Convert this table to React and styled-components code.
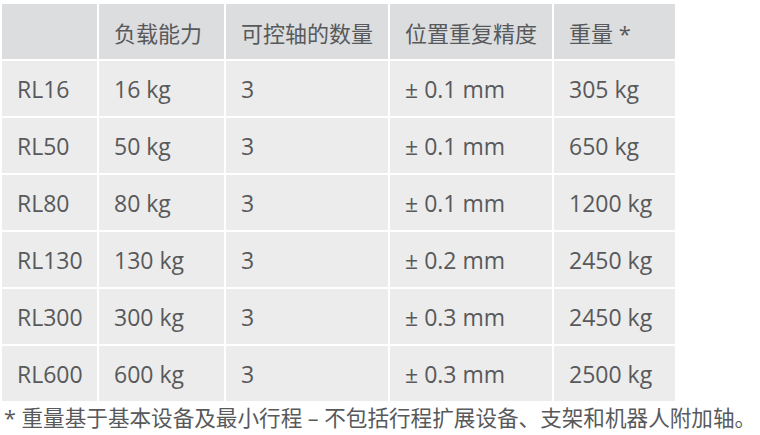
import styled, { createGlobalStyle } from 'styled-components'

const GlobalStyle = createGlobalStyle`
    body {
        margin: 0;
        background: #ffffff;
        font-family: "Open Sans", "Noto Sans CJK SC", sans-serif;
        color: #58595b;
    }
`

const Wrap = styled.div`
    padding-top: 2px;
    width: 760px;
`

const Table = styled.table`
    border-collapse: separate;
    border-spacing: 2px;
    table-layout: fixed;
`

const Head = styled.th`
    background: #dcdddf;
    font-weight: 400;
    font-size: 22px;
    text-align: left;
    height: 55px;
    padding: 0 0 0 15px;
    white-space: nowrap;
`

const Cell = styled.td`
    background: #ececec;
    font-size: 23px;
    height: 55px;
    padding: 0 0 0 15px;
    white-space: nowrap;
`

const Note = styled.p`
    margin: 0;
    padding-left: 4px;
    font-size: 21.6px;
    line-height: 30px;
    white-space: nowrap;
`

const cols = [95, 125, 162, 162, 121]
const headers = ['', '负载能力', '可控轴的数量', '位置重复精度', '重量 *']

const rows = [
    ['RL16', '16 kg', '3', '± 0.1 mm', '305 kg'],
    ['RL50', '50 kg', '3', '± 0.1 mm', '650 kg'],
    ['RL80', '80 kg', '3', '± 0.1 mm', '1200 kg'],
    ['RL130', '130 kg', '3', '± 0.2 mm', '2450 kg'],
    ['RL300', '300 kg', '3', '± 0.3 mm', '2450 kg'],
    ['RL600', '600 kg', '3', '± 0.3 mm', '2500 kg'],
]

export default function App() {
    return (
        <Wrap>
            <GlobalStyle />
            <Table>
                <colgroup>
                    {cols.map((w, i) => <col key={i} style={{ width: w }} />)}
                </colgroup>
                <thead>
                    <tr>
                        {headers.map((h, i) => <Head key={i}>{h}</Head>)}
                    </tr>
                </thead>
                <tbody>
                    {rows.map((r) => (
                        <tr key={r[0]}>
                            {r.map((c, i) => <Cell key={i}>{c}</Cell>)}
                        </tr>
                    ))}
                </tbody>
            </Table>
            <Note>* 重量基于基本设备及最小行程 – 不包括行程扩展设备、支架和机器人附加轴。</Note>
        </Wrap>
    )
}
